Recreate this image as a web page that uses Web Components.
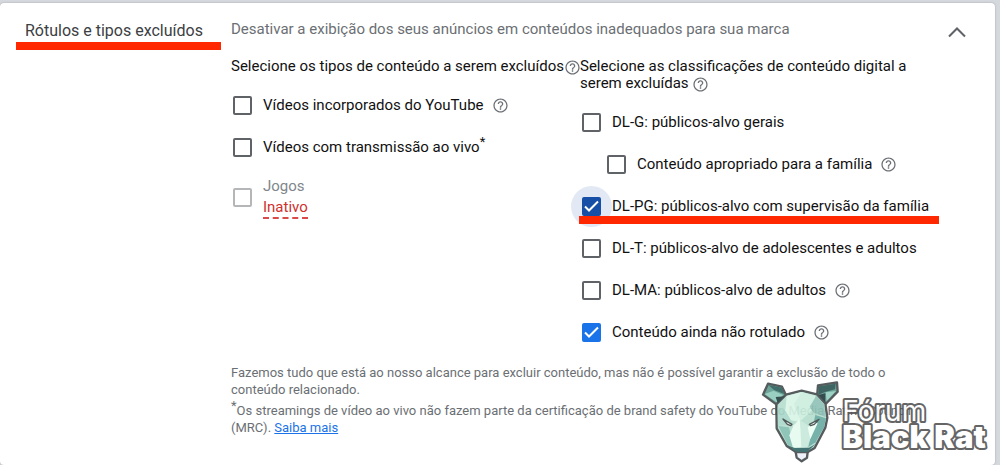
<!DOCTYPE html>
<html lang="pt-BR">
<head>
<meta charset="utf-8">
<meta name="viewport" content="width=device-width, initial-scale=1">
<title>Rótulos e tipos excluídos</title>
<style>
html { background: #d5d8dc; }
body { margin: 0; font-family: Roboto, "Liberation Sans", sans-serif; color: #111; }
</style>
</head>
<body>
<exclusion-panel></exclusion-panel>

<template id="help-tpl">
<style>
:host { display: inline-flex; width: 17px; height: 17px; vertical-align: middle; color: #6b6f74; }
button { all: unset; display: flex; cursor: pointer; }
</style>
<button type="button" aria-label="Ajuda"><svg width="17" height="17" viewBox="0 0 24 24" fill="currentColor"><path d="M11 18h2v-2h-2v2zm1-16C6.480 2 2 6.480 2 12s4.480 10 10 10 10-4.480 10-10S17.520 2 12 2zm0 18.200c-4.520 0-8.200-3.680-8.200-8.200S7.480 3.800 12 3.800s8.200 3.680 8.200 8.200-3.680 8.200-8.200 8.200zm0-14.200c-2.210 0-4 1.790-4 4h1.900c0-1.160.94-2.100 2.100-2.100s2.100.94 2.100 2.100c0 2-3.050 1.750-3.050 5h1.900c0-2.250 3.050-2.500 3.050-5 0-2.210-1.790-4-4-4z"/></svg></button>
</template>

<template id="check-tpl">
<style>
:host { display: flex; align-items: center; min-height: 42px; font-size: 15px; line-height: 21px; }
.box { position: relative; display: grid; width: 19px; height: 19px; margin: 0 11px 0 2px; flex: none; }
input, .tick { grid-area: 1 / 1; }
input { appearance: none; box-sizing: border-box; width: 19px; height: 19px; margin: 0; border: 2px solid #5f6368; border-radius: 2px; background: #fff; }
input:checked { background: #1a73e8; border-color: #1a73e8; }
input:disabled { border-color: #b4b6b8; }
.tick { display: none; pointer-events: none; z-index: 1; }
input:checked + .tick { display: block; }
:host([active]) .box::before { content: ""; position: absolute; inset: -11px; border-radius: 50%; background: #e3e9f4; }
:host([active]) input { background: #174ea6; border-color: #174ea6; z-index: 1; }
:host([active]) label { position: relative; }
:host([disabled]) { color: #80868b; }
help-icon { margin-left: 8px; }
::slotted(a) { display: block; width: max-content; color: #d02f2c; text-decoration: none; border-bottom: 2px dashed #d94a48; line-height: 20px; }
::slotted(sup) { font-size: 13px; line-height: 0; }
</style>
<span class="box"><input type="checkbox" id="c"><svg class="tick" width="19" height="19" viewBox="0 0 19 19" fill="none" stroke="#fff" stroke-width="2"><path d="M3 9.500l4 4 9-9"/></svg></span>
<label for="c"><slot></slot></label>
</template>

<template id="logo-tpl">
<style>
:host { display: block; width: 240px; height: 90px; opacity: .9; pointer-events: none; }
svg { display: block; }
text { fill: #fff; stroke: #555; paint-order: stroke; stroke-linejoin: round; font-family: Inter, "Liberation Sans", sans-serif; }
</style>
<svg width="240" height="90" viewBox="0 0 720 270" role="img" aria-label="Fórum Black Rat">
<g stroke="#444b4c" stroke-width="7" stroke-linejoin="round">
<path fill="#5f9b90" d="M39 26L81 35 94 62 64 88 24 59z"/>
<path fill="#5f9b90" d="M189 31L246 22 248 50 212 87 186 65z"/>
<path fill="#b5ddce" d="M93 59L140 47 186 58 211 85 217 128 211 158 179 219 157 232 123 231 95 213 65 160 64 88z"/>
<path fill="#eef0fb" d="M122 231L158 231 156 248 140 259 125 248z"/>
</g>
<path fill="#2c5f5a" d="M40 30L80 38 88 57 57 45z"/>
<path fill="#8fcbbb" d="M29 57L56 47 84 60 65 82z"/>
<path fill="#213d3e" d="M62 66L90 64 68 84z"/>
<path fill="#2a5552" d="M242 26L240 43 210 51 190 59 192 34z"/>
<path fill="#93cfbe" d="M212 52L243 48 215 78z"/>
<path fill="#20383a" d="M190 60L211 55 211 82z"/>
<path fill="#d9f5e7" d="M95 63L140 51 156 83 132 140 70 129 91 104z"/>
<path fill="#cbeede" d="M140 51L181 62 172 104 137 138 117 87z"/>
<path fill="#8fc2b6" d="M184 62L207 88 212 126 176 113 164 95z"/>
<path fill="#68aaa0" d="M181 120L213 130 207 157 182 202 160 216z"/>
<path fill="#a8d8c9" d="M68 97L92 108 114 146 69 152z"/>
<path fill="#83bfb1" d="M70 153L102 157 116 217 98 209z"/>
<path fill="#e5fbef" d="M116 151L134 133 146 217 114 218 103 181z"/>
<path fill="#c8e8db" d="M135 135L158 151 169 183 156 218 139 218z"/>
<path fill="#edfff6" d="M178 143L188 145 166 192 158 156z"/>
<path fill="#2f6665" d="M96 210L119 219 162 218 182 207 156 231 124 230z"/>
<path fill="#e8f0ec" stroke="#3f4949" stroke-width="4" stroke-linejoin="round" d="M84 132L111 148 107 152 97 148zM192 133L163 148 167 152 178 148z"/>
<g stroke-width="12">
<text x="262" y="138" font-size="84" font-weight="400">Fórum</text>
<text x="262" y="220" font-size="93" font-weight="900">Black Rat</text>
</g>
</svg>
</template>

<template id="panel-tpl">
<style>
:host { display: block; padding: 3px 5px 0 0; }
.card { position: relative; box-sizing: border-box; min-height: calc(100vh - 3px); padding: 16px 22px 24px 25px; border-radius: 4px; background: #fff; box-shadow: 0 0 2px #9aa0a6; display: grid; grid-template-columns: 206px minmax(0, 1fr) 32px; align-items: start; }
h2, p, h3 { margin: 0; font-weight: 400; }
h2 { position: relative; font-size: 16px; line-height: 24px; color: #3c4043; justify-self: start; }
.mark { position: absolute; height: 8px; background: #ff2800; }
h2 .mark { top: 23px; left: -9px; right: -18px; }
.desc { font-size: 15px; line-height: 20px; color: #6b6f74; }
.groups { display: grid; grid-template-columns: 349px minmax(0, 348px); margin-top: 19px; }
h3 { font-size: 15px; line-height: 17px; }
h3 help-icon { margin: -4px 0; }
.left h3 { white-space: nowrap; }
.options { margin-top: 9px; }
.child { margin-left: 25px; }
.games { margin-top: 8px; }
.marked { position: relative; width: max-content; }
.marked .mark { top: 31px; left: -1px; right: -10px; z-index: 2; }
.notes { margin-top: 11px; max-width: 700px; font-size: 13px; line-height: 17px; color: #6b6f74; }
.notes p + p { margin-top: 4px; }
.notes sup { font-size: 13px; line-height: 0; }
.notes a { color: #1a73e8; }
.toggle { all: unset; display: flex; justify-self: center; margin-top: 2px; color: #5f6368; cursor: pointer; }
forum-logo { position: absolute; right: 0; bottom: 0; }
</style>
<section class="card">
<h2>Rótulos e tipos excluídos<span class="mark"></span></h2>
<div>
<p class="desc">Desativar a exibição dos seus anúncios em conteúdos inadequados para sua marca</p>
<div class="groups">
<div class="left">
<h3>Selecione os tipos de conteúdo a serem excluídos<help-icon></help-icon></h3>
<div class="options">
<check-option help>Vídeos incorporados do YouTube</check-option>
<check-option>Vídeos com transmissão ao vivo<sup>*</sup></check-option>
<check-option class="games" disabled>Jogos<a href="#inativo">Inativo</a></check-option>
</div>
</div>
<div>
<h3>Selecione as classificações de conteúdo digital a serem excluídas <help-icon></help-icon></h3>
<div class="options">
<check-option>DL-G: públicos-alvo gerais</check-option>
<check-option class="child" help>Conteúdo apropriado para a família</check-option>
<div class="marked"><check-option checked active>DL-PG: públicos-alvo com supervisão da família</check-option><span class="mark"></span></div>
<check-option>DL-T: públicos-alvo de adolescentes e adultos</check-option>
<check-option help>DL-MA: públicos-alvo de adultos</check-option>
<check-option checked help>Conteúdo ainda não rotulado</check-option>
</div>
</div>
</div>
<div class="notes">
<p>Fazemos tudo que está ao nosso alcance para excluir conteúdo, mas não é possível garantir a exclusão de todo o conteúdo relacionado.</p>
<p><sup>*</sup>Os streamings de vídeo ao vivo não fazem parte da certificação de brand safety do YouTube do Media Rating Council (MRC). <a href="#saiba-mais">Saiba mais</a></p>
</div>
</div>
<button class="toggle" type="button" aria-label="Recolher"><svg width="24" height="24" viewBox="0 0 24 24" fill="none" stroke="currentColor" stroke-width="2"><path d="M4 15.500l8-8 8 8"/></svg></button>
<forum-logo></forum-logo>
</section>
</template>

<script>
class TemplateElement extends HTMLElement {
  constructor() {
    super();
    const tpl = document.getElementById(this.constructor.template);
    this.attachShadow({ mode: "open" }).append(tpl.content.cloneNode(true));
  }
}
class HelpIcon extends TemplateElement { static template = "help-tpl"; }
class ForumLogo extends TemplateElement { static template = "logo-tpl"; }
class ExclusionPanel extends TemplateElement { static template = "panel-tpl"; }
class CheckOption extends TemplateElement {
  static template = "check-tpl";
  connectedCallback() {
    const input = this.shadowRoot.querySelector("input");
    input.checked = this.hasAttribute("checked");
    input.disabled = this.hasAttribute("disabled");
    if (this.hasAttribute("help") && !this.shadowRoot.querySelector("help-icon")) {
      this.shadowRoot.append(document.createElement("help-icon"));
    }
  }
}
customElements.define("help-icon", HelpIcon);
customElements.define("forum-logo", ForumLogo);
customElements.define("check-option", CheckOption);
customElements.define("exclusion-panel", ExclusionPanel);
</script>
</body>
</html>
